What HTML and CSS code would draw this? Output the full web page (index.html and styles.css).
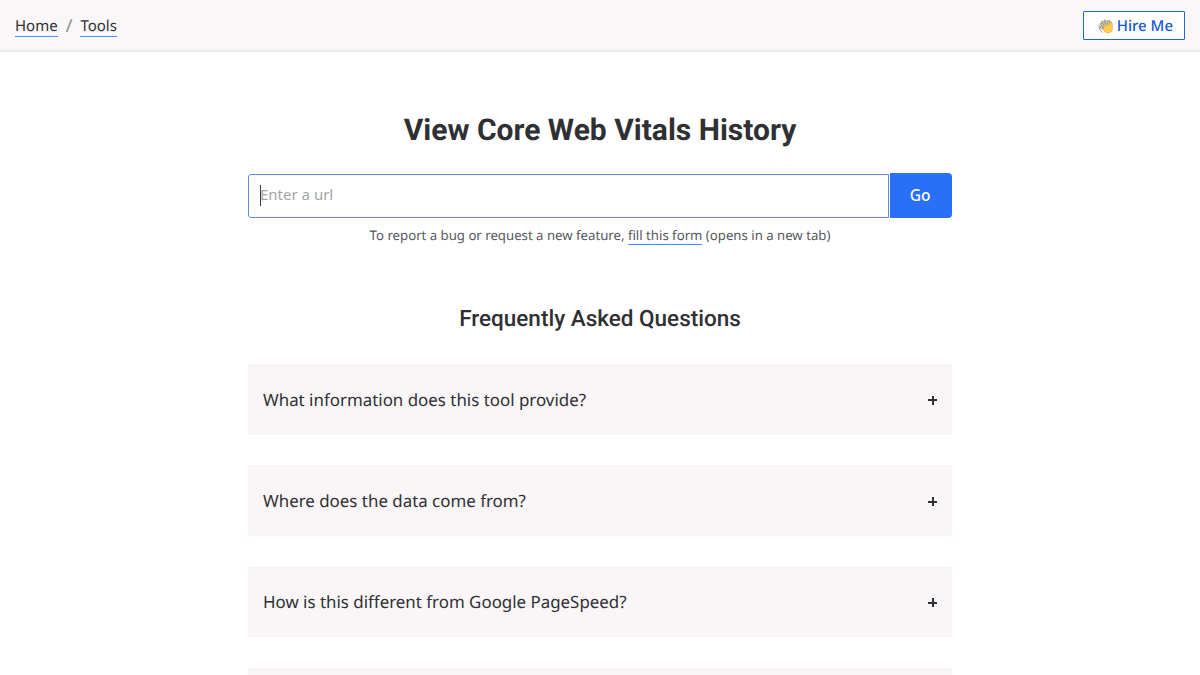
FILE: index.html
```
<!DOCTYPE html>
<html lang="en">
<head>
    <meta charset="UTF-8">
    <meta name="viewport" content="width=device-width, initial-scale=1.0">
    <title>View Core Web Vitals History</title>
    <link rel="stylesheet" href="styles.css">
</head>
<body>

    <header class="header">
        <nav class="breadcrumb">
            <a class="link" href="#">Home</a>
            <span class="separator">/</span>
            <a class="link" href="#">Tools</a>
        </nav>
        <a class="hire" href="#">
            <svg class="wave" viewBox="0 0 32 32" aria-hidden="true">
                <g fill="none" stroke="#8c8b86" stroke-width="1.8" stroke-linecap="round">
                    <path d="M2 14 Q1 23 9 29"/>
                    <path d="M25 3 Q30 6 30 12"/>
                </g>
                <g fill="none" stroke="#8c8b86" stroke-width="5.2" stroke-linecap="round">
                    <path d="M16 17L6 11M18 15L9 6M21 14L15 4M24 14L22 5M15 21L6 18"/>
                </g>
                <g fill="none" stroke="#cfc49f" stroke-width="3" stroke-linecap="round">
                    <path d="M16 17L6 11M18 15L9 6M21 14L15 4M24 14L22 5M15 21L6 18"/>
                </g>
                <path fill="#fccb4f" stroke="#c99b35" stroke-width="1" d="M13 15L23 12L25 8Q28 5 30 9L31 20Q30 29 22 30Q15 30 11 23Z"/>
            </svg>
            <span>Hire Me</span>
        </a>
    </header>

    <main class="main">
        <h1 class="title">View Core Web Vitals History</h1>

        <form class="search">
            <input class="search-input" type="text" placeholder="Enter a url">
            <span class="caret"></span>
            <button class="search-button" type="button">Go</button>
        </form>
        <p class="note">To report a bug or request a new feature, <a class="link" href="#">fill this form</a> (opens in a new tab)</p>

        <h2 class="subtitle">Frequently Asked Questions</h2>

        <div class="faq">
            <div class="faq-item"><span>What information does this tool provide?</span><span class="plus"></span></div>
            <div class="faq-item"><span>Where does the data come from?</span><span class="plus"></span></div>
            <div class="faq-item"><span>How is this different from Google PageSpeed?</span><span class="plus"></span></div>
            <div class="faq-item"></div>
        </div>
    </main>

</body>
</html>
```
FILE: styles.css
```
* {
    box-sizing: border-box;
}

body {
    margin: 0;
    height: 100vh;
    overflow: hidden;
    font-family: "Noto Sans", sans-serif;
    font-size: 15px;
    color: #2f3034;
    background: #fff;
    text-rendering: geometricPrecision;
}

.header {
    display: flex;
    align-items: center;
    justify-content: space-between;
    height: 52px;
    padding: 0 15px 1px;
    background: #faf7f9;
    border-bottom: 2px solid #ebe9eb;
}

.breadcrumb {
    display: flex;
    align-items: center;
    gap: 8px;
}

.link {
    color: inherit;
    text-decoration: none;
    border-bottom: 1px solid #4f8cff;
}

.breadcrumb .link {
    line-height: 20px;
    padding-top: 3px;
}

.separator {
    padding-top: 2px;
    color: #8b8b90;
    font-size: 18px;
    line-height: 20px;
}

.hire {
    display: flex;
    align-items: center;
    gap: 4px;
    height: 29px;
    margin-top: 2px;
    padding: 1px 11px 0 14px;
    border: 1px solid #2264d9;
    border-radius: 1px;
    color: #1558d6;
    font-weight: 500;
    text-decoration: none;
    background: #fff;
}

.wave {
    width: 15px;
    height: 15px;
}

.main {
    width: 704px;
    margin: 0 auto;
}

.title {
    margin: 60px 0 23px;
    font: bold 30px/38px Roboto, sans-serif;
    text-align: center;
}

.search {
    position: relative;
    display: flex;
    height: 45px;
}

.search-input {
    flex: 1;
    height: 44px;
    margin: 1px 1px 0 0;
    padding: 0 11px 4px;
    border: 1px solid #5d8ddb;
    border-radius: 3px 0 0 3px;
    outline: none;
    font: inherit;
}

.search-input::placeholder {
    color: #a5a5a9;
}

.caret {
    position: absolute;
    left: 12px;
    top: 12px;
    width: 1px;
    height: 21px;
    background: #3b3b42;
}

.search-button {
    width: 62px;
    padding: 0 2px 1px 0;
    border: 0;
    border-radius: 0 4px 4px 0;
    color: #fff;
    background: #2970f6;
    font: 500 15.5px "Noto Sans", sans-serif;
}

.note {
    margin: 7px 0 0;
    font-size: 13.2px;
    line-height: 20px;
    text-align: center;
    color: #56575c;
}

.subtitle {
    margin: 59px 0 29.75px;
    font: 500 22.5px/30px Roboto, sans-serif;
    text-align: center;
}

.faq {
    display: grid;
    gap: 30.25px;
}

.faq-item {
    display: flex;
    align-items: center;
    justify-content: space-between;
    height: 71px;
    padding: 0 15px;
    font-size: 16.9px;
    background: #faf6f8;
}

.plus {
    width: 9px;
    height: 9px;
    margin-top: 2px;
    background:
        linear-gradient(#303136, #303136) center / 9px 2px no-repeat,
        linear-gradient(#303136, #303136) center / 2px 9px no-repeat;
}
```
